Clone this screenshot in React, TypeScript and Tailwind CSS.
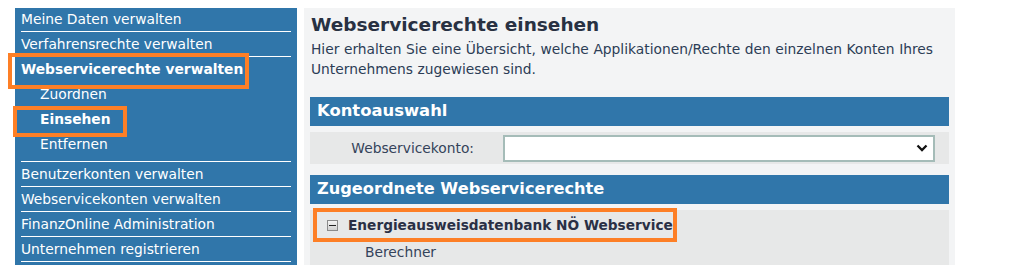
const font = { fontFamily: '"DejaVu Sans", Verdana, sans-serif' }

function NavItem({ label, bold }: { label: string; bold?: boolean }) {
  return (
    <li className={`flex h-[25px] items-center border-b border-white ${bold ? 'font-bold' : ''}`}>
      {label}
    </li>
  )
}

function SubItem({ label, bold }: { label: string; bold?: boolean }) {
  return (
    <li className={`flex h-[25px] items-center pl-[19px] ${bold ? 'font-bold' : ''}`}>{label}</li>
  )
}

function MinusBox() {
  return (
    <span className="flex h-[11px] w-[11px] items-center justify-center border border-[#8a8a8a] bg-gradient-to-b from-[#f4f4f4] to-[#d0d0d0]">
      <span className="h-[1px] w-[7px] bg-[#222]" />
    </span>
  )
}

export default function App() {
  return (
    <div className="relative flex min-h-[265px] bg-white pl-[15px] pt-[8px] text-[13.8px]" style={font}>
      {/* Sidebar navigation */}
      <nav className="w-[282px] shrink-0 bg-[#3076aa] px-[6px] text-white">
        <ul>
          <li className="flex h-[24px] items-center border-b border-white">Meine Daten verwalten</li>
          <NavItem label="Verfahrensrechte verwalten" />
          <li className="border-b border-white pb-[4px]">
            <div className="flex h-[25px] items-center font-bold">Webservicerechte verwalten</div>
            <ul>
              <SubItem label="Zuordnen" />
              <SubItem label="Einsehen" bold />
              <SubItem label="Entfernen" />
            </ul>
          </li>
          <NavItem label="Benutzerkonten verwalten" />
          <NavItem label="Webservicekonten verwalten" />
          <NavItem label="FinanzOnline Administration" />
          <NavItem label="Unternehmen registrieren" />
        </ul>
      </nav>

      {/* Main content */}
      <main className="ml-[7px] w-[651px] shrink-0 bg-[#f3f4f5] px-[6px] pt-[4px]">
        <h1 className="pl-[1px] text-[18.5px] font-bold leading-[25px] text-[#283142]">
          Webservicerechte einsehen
        </h1>
        <p className="mr-[16px] pl-[1px] pt-[2px] text-justify leading-[20px] text-[#2c3d55]">
          Hier erhalten Sie eine Übersicht, welche Applikationen/Rechte den einzelnen Konten Ihres Unternehmens
          zugewiesen sind.
        </p>

        <section className="mt-[18px]">
          <h2 className="flex h-[29px] items-center bg-[#3076aa] px-[7px] text-[16.4px] font-bold text-white">
            Kontoauswahl
          </h2>
          <div className="mt-[6px] flex h-[32px] items-center bg-[#e7e8e8] text-[#34435a]">
            <label className="w-[164px] text-right">Webservicekonto:</label>
            <div className="relative ml-[29px] h-[27px] w-[432px] border-2 border-[#a5bcb8] bg-white">
              <select className="h-full w-full appearance-none bg-transparent outline-none" />
              <svg
                viewBox="0 0 12 8"
                className="pointer-events-none absolute right-[5px] top-[7px] h-[8px] w-[12px]"
                fill="none"
                stroke="#111"
                strokeWidth="2.3"
              >
                <polyline points="1.5,1.5 6,6 10.5,1.5" />
              </svg>
            </div>
          </div>
        </section>

        <section className="mt-[11px]">
          <h2 className="flex h-[29px] items-center bg-[#3076aa] px-[7px] text-[16.2px] font-bold text-white">
            Zugeordnete Webservicerechte
          </h2>
          <div className="mt-[6px] h-[60px] bg-[#e7e8e8] text-[#2a3045]">
            <div className="flex h-[30px] items-center gap-[10px] pl-[17px] text-[13.7px] font-bold">
              <MinusBox />
              <span>Energieausweisdatenbank NÖ Webservice</span>
            </div>
            <div className="flex h-[24px] items-center pl-[55px] text-[#34435a]">Berechner</div>
          </div>
        </section>
      </main>

      {/* Orange highlight annotations */}
      <div className="pointer-events-none absolute left-[8px] top-[53px] h-[36px] w-[241px] border-[4px] border-[#fd7f26]" />
      <div className="pointer-events-none absolute left-[13px] top-[106px] h-[31px] w-[114px] border-[4px] border-[#fd7f26]" />
      <div className="pointer-events-none absolute left-[313px] top-[208px] h-[34px] w-[364px] border-[4px] border-[#fd7f26]" />
    </div>
  )
}
